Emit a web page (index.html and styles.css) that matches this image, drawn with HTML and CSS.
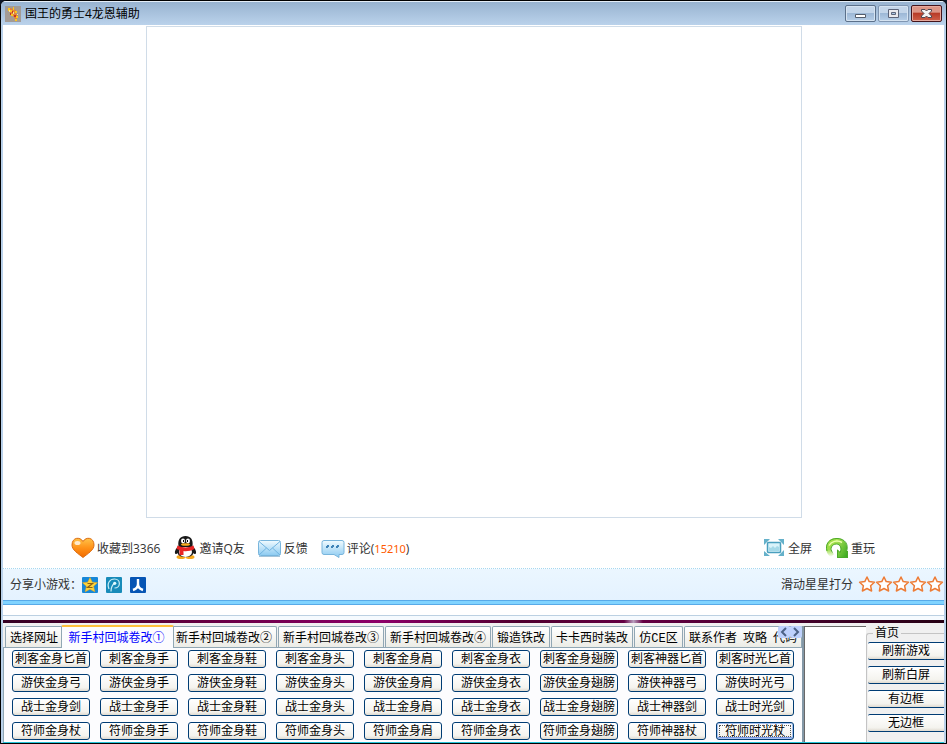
FILE: index.html
```html
<!DOCTYPE html>
<html lang="zh-CN">
<head>
<meta charset="utf-8">
<title>国王的勇士4龙恩辅助</title>
<link rel="stylesheet" href="styles.css">
</head>
<body>
<div class="window">
  <header class="titlebar">
    <svg class="app-icon" viewBox="0 0 16 16" aria-hidden="true"><path fill="#a39b95" d="M0 0h16v16H0z"/><path fill="#e0843c" d="M3 2h3l2 1 3 1v3l2 3-1 3-2 1-1-3-3-2-2-4z"/><path fill="#ffc61c" d="M3 2h2v2h2v2H5V5H3zM8 1h1v3H8zM10 5h2v2h-2zM6 8h2v2H6zM11 10h2v2h-2zM10 13h2v2h-2z"/><path fill="#f4e6a6" d="M4 4h1v2H4zM8 6h1v2H8zM12 8h1v1h-1z"/><path fill="#c8351c" d="M7 5h1v2H7zM9 9h2v2H9zM5 7h1v2H5z"/></svg>
    <h1>国王的勇士4龙恩辅助</h1>
    <div class="win-controls">
      <button class="win-btn" type="button" aria-label="最小化"><svg viewBox="0 0 29 15"><path fill="#fff" stroke="#535c6b" d="M9.500 8.500h10v3h-10z"/></svg></button>
      <button class="win-btn muted" type="button" aria-label="最大化"><svg viewBox="0 0 29 15"><path fill="#e9e9ee" stroke="#5c6479" d="M9.500 3.500h10v8h-10z"/><path fill="#a9c4e3" stroke="#5c6479" d="M12.500 6.500h4v2h-4z"/></svg></button>
      <button class="win-btn close" type="button" aria-label="关闭"><svg viewBox="0 0 29 15"><path fill="#f5f3f3" stroke="#4c4650" d="M9.500 3.500h3.500l1.500 1.500 1.500-1.500h3.500v1.500L17 7.500l2.500 2.500v1.500H16L14.500 10 13 11.500H9.500V10L12 7.500 9.500 5z"/></svg></button>
    </div>
  </header>

  <main class="page">
    <div class="stage"></div>
    <nav class="actions">
      <a href="#fav"><svg viewBox="0 0 24 24"><defs><linearGradient id="h" x2="0" y2="1"><stop stop-color="#ffc34a"/><stop offset=".5" stop-color="#ff9218"/><stop offset="1" stop-color="#f26b00"/></linearGradient></defs><path fill="url(#h)" stroke="#dc6b10" d="M12 4.500C9-.7 1 .3 1 8c0 5 6 8.500 11 12.500C17 16.500 23 13 23 8 23 .3 15-.7 12 4.500z"/><ellipse cx="6.500" cy="6" rx="3" ry="2" fill="#fff" opacity=".75"/></svg><span>收藏到3366</span></a>
      <a href="#invite"><svg viewBox="0 0 24 24"><ellipse cx="8" cy="20" rx="4.500" ry="2" fill="#f7a81b"/><ellipse cx="17" cy="20" rx="4.500" ry="2" fill="#f7a81b"/><path fill="#191919" d="M5.500 9C4.500 2.500 7.500-1 12.500-1s8 3.500 7 10c3 3 4.500 6 3 8-1 .5-2-1-2-1-1 3-4 4-8 4s-7-1-8-4c0 0-1 1.500-2 1-1.500-2 0-5 3-8z"/><ellipse cx="12.500" cy="15" rx="6.500" ry="5" fill="#fff"/><ellipse cx="10" cy="4" rx="2" ry="2.400" fill="#fff"/><ellipse cx="15" cy="4" rx="2" ry="2.400" fill="#fff"/><path d="M10 3h1v2h-1zM14 3h1v2h-1z"/><ellipse cx="12.500" cy="7.500" rx="4.500" ry="1.300" fill="#f9ae22"/><path fill="#e82424" d="M4.500 8.500c5 2.500 11 2.500 16 0l1 3.500c-4 2-8 2.500-11 2v4h-4v-5l-3-1z"/></svg><span>邀请Q友</span></a>
      <a href="#feedback"><svg viewBox="0 0 24 24"><defs><linearGradient id="m" x2="0" y2="1"><stop stop-color="#f1fbff"/><stop offset="1" stop-color="#8bcaf1"/></linearGradient></defs><rect x=".5" y="3.500" width="22" height="15" rx="2" fill="url(#m)" stroke="#78b5dc"/><path d="M1 4.500l10.500 9 10.500-9M1 18l7.500-7M22 18l-7.500-7" fill="none" stroke="#70b4e0"/><path d="M1 19.500h21" stroke="#a4c4da"/></svg><span>反馈</span></a>
      <a href="#comments"><svg viewBox="0 0 24 24"><path fill="url(#m)" stroke="#78b5dc" d="M3 3.500h18q2 0 2 2v10q0 2-2 2h-3v3l-5-3H3q-2 0-2-2v-10q0-2 2-2z"/><path fill="#3f83b7" d="M5 9h1V8h2v2H7v1H5zM10 9h1V8h2v2h-1v1h-2zM15 9h1V8h2v2h-1v1h-2z"/></svg><span>评论(<b>15210</b>)</span></a>
      <a href="#full" class="push"><svg viewBox="0 0 24 24"><path fill="#65b1ca" d="M2 2h6L2 8zM16 2h6v6zM2 14l6 5H2zM22 13v6h-6z"/><rect x="5.500" y="5.500" width="13" height="10" rx="1" fill="#d9f3fa" stroke="#4a9fbe" stroke-width="1.500"/><path fill="#a5d9e8" d="M7 10l2 1 2-2 2 2 2-2 2 1v4H7z"/></svg><span>全屏</span></a>
      <a href="#replay"><svg viewBox="0 0 24 24"><defs><linearGradient id="r" x2="1" y2="1"><stop stop-color="#b7e95a"/><stop offset="1" stop-color="#2fa31b"/></linearGradient><linearGradient id="t" x2="0" y2="1"><stop stop-color="#a5e04a"/><stop offset=".6" stop-color="#9bdc48"/><stop offset="1" stop-color="#fff"/></linearGradient></defs><path fill="url(#t)" d="M12 1v6C5 7 4 14 9 17l-3 3C-2 15 0 1 12 1z"/><path fill="url(#r)" d="M11 .9c8 0 13 6.500 10.500 13.100H23v7H12v-9l3 3c2-4 0-8-4-8z"/><path d="M12 1.500c8 0 12 6 9.500 13h1v6h-10v-7.500l2.500 2.500c2.500-4 0-8.500-3.500-8.500-5 0-7 5-4 8.500M2 14C0 7 4 1.500 12 1.500" fill="none" stroke="#4aa92a"/><path d="M4 8.500C6 4.500 12 2.500 17 5.500" fill="none" stroke="#eaffac" stroke-width="1.500"/></svg><span>重玩</span></a>
    </nav>
    <section class="share">
      <span>分享小游戏：</span>
      <a href="#qzone" aria-label="QQ空间"><svg viewBox="0 0 16 16"><rect width="16" height="16" rx="1" fill="#1687d8"/><path fill="#ffd33a" stroke="#f3a617" stroke-width=".5" d="M8 .5l2.300 4.700 5.200.5-3.900 3.600 1.200 5.500L8 12.200l-4.800 2.600 1.200-5.500L.5 5.700l5.200-.5z"/><path d="M5.500 6.500h5l-5 4h5" fill="none" stroke="#8a6218" stroke-width="1.200"/></svg></a>
      <a href="#weibo" aria-label="腾讯微博"><svg viewBox="0 0 16 16"><rect width="16" height="16" rx="1" fill="#188bb9"/><path d="M3 12C.5 6 4 2 8.500 2c6.500 0 6.500 9 0 9M5 14.500c0-4 1-6 3-8" fill="none" stroke="#caedf5" stroke-width="1.200"/><circle cx="8.700" cy="6.300" r="1.600" fill="#e5fbff"/></svg></a>
      <a href="#pengyou" aria-label="朋友"><svg viewBox="0 0 16 16"><rect width="16" height="16" rx="1" fill="#0755b4"/><path d="M8 2v5c0 3-2 5-5 6M8 7c0 3 2 5 5 6" fill="none" stroke="#fff" stroke-width="2.400"/></svg></a>
      <span class="rate-label">滑动星星打分</span>
      <span class="stars">
        <svg viewBox="0 0 85 16" aria-hidden="true"><defs><path id="s" fill="#fff" stroke="#ed7c36" stroke-width="1.500" stroke-linejoin="round" d="M8 1l2.200 4.600 5.200.6-3.800 3.500 1 5.300L8 12.500 3.400 15l1-5.300L.6 6.200l5.200-.6z"/></defs><use href="#s"/><use href="#s" x="17"/><use href="#s" x="34"/><use href="#s" x="51"/><use href="#s" x="68"/></svg>
      </span>
    </section>
    <div class="blue-bar"></div>
    <div class="gap"></div>
    <div class="lower-line"></div>
  </main>
  <div class="purple"></div>

  <section class="panel">
    <div class="tool-tabs">
      <div class="tabs" role="tablist">
        <button type="button" role="tab" class="tab w-small">选择网址</button>
        <button type="button" role="tab" class="tab active" aria-selected="true">新手村回城卷改①</button>
        <button type="button" role="tab" class="tab w-long">新手村回城卷改②</button>
        <button type="button" role="tab" class="tab w-long">新手村回城卷改③</button>
        <button type="button" role="tab" class="tab w-long">新手村回城卷改④</button>
        <button type="button" role="tab" class="tab w-small">锻造铁改</button>
        <button type="button" role="tab" class="tab w-mid">卡卡西时装改</button>
        <button type="button" role="tab" class="tab w-short">仿<span class="mono">CE</span>区</button>
        <button type="button" role="tab" class="tab w-rest">联系作者<i></i>攻略<i></i>代码</button>
        <div class="scroller">
          <button type="button" aria-label="向左"><svg viewBox="0 0 12 12"><path d="M8 2L4 6l4 4"/></svg></button>
          <button type="button" aria-label="向右"><svg viewBox="0 0 12 12"><path d="M4 2l4 4-4 4"/></svg></button>
        </div>
      </div>
      <div class="grid">
        <button type="button">刺客金身匕首</button><button type="button">刺客金身手</button><button type="button">刺客金身鞋</button><button type="button">刺客金身头</button><button type="button">刺客金身肩</button><button type="button">刺客金身衣</button><button type="button">刺客金身翅膀</button><button type="button">刺客神器匕首</button><button type="button">刺客时光匕首</button>
        <button type="button">游侠金身弓</button><button type="button">游侠金身手</button><button type="button">游侠金身鞋</button><button type="button">游侠金身头</button><button type="button">游侠金身肩</button><button type="button">游侠金身衣</button><button type="button">游侠金身翅膀</button><button type="button">游侠神器弓</button><button type="button">游侠时光弓</button>
        <button type="button">战士金身剑</button><button type="button">战士金身手</button><button type="button">战士金身鞋</button><button type="button">战士金身头</button><button type="button">战士金身肩</button><button type="button">战士金身衣</button><button type="button">战士金身翅膀</button><button type="button">战士神器剑</button><button type="button">战士时光剑</button>
        <button type="button">符师金身杖</button><button type="button">符师金身手</button><button type="button">符师金身鞋</button><button type="button">符师金身头</button><button type="button">符师金身肩</button><button type="button">符师金身衣</button><button type="button">符师金身翅膀</button><button type="button">符师神器杖</button><button type="button" class="focused">符师时光杖</button>
      </div>
    </div>
    <textarea class="memo" aria-label="记录"></textarea>
    <fieldset class="home">
      <legend>首页</legend>
      <button type="button">刷新游戏</button>
      <button type="button">刷新白屏</button>
      <button type="button">有边框</button>
      <button type="button">无边框</button>
    </fieldset>
  </section>
</div>
</body>
</html>
```
FILE: styles.css
```css
* { box-sizing: border-box; }

body {
  margin: 0;
  background: #0c1626;
  font: 12px/16px "Liberation Sans", "Noto Sans CJK SC", sans-serif;
  color: #000;
}

button {
  font: inherit;
  color: inherit;
  padding: 0;
  margin: 0;
  white-space: nowrap;
}

svg { display: block; overflow: visible; }

.window {
  display: flex;
  flex-direction: column;
  height: 100vh;
  border: 1px solid #000;
  border-radius: 6px 6px 0 0;
  background: #b9d1ea;
  overflow: hidden;
}

.titlebar {
  display: flex;
  align-items: center;
  height: 24px;
  flex: none;
  padding: 0 4px;
  border-top: 1px solid #e4eef8;
  background: linear-gradient(#98b3d0, #bad2eb);
}

.app-icon { width: 16px; height: 16px; }

.titlebar h1 {
  flex: 1;
  margin: 0 0 0 4px;
  font: 12px/16px "Open Sans", "Noto Sans CJK SC", sans-serif;
}

.win-controls { display: flex; gap: 2px; }

.win-btn {
  width: 31px;
  height: 17px;
  border: 1px solid #5b708a;
  border-radius: 2px;
  background: linear-gradient(#c3d5e9 45%, #9db8d6 50%, #b7cfe8);
  box-shadow: inset 0 0 0 1px #d5e3f1;
}

.win-btn svg { width: 29px; height: 15px; }

.win-btn.muted { border-color: #8096b2; }

.win-btn.close {
  border-color: #43141b;
  background: linear-gradient(#dc9586 40%, #b83c28 50%, #d0604a);
  box-shadow: inset 0 0 0 1px #e7aa9e;
}

.page {
  flex: 1;
  display: flex;
  flex-direction: column;
  min-height: 0;
  margin: 0 2px;
  padding-top: 1px;
  background: #fff;
  color: #333;
}

.stage {
  flex: 1;
  width: 70%;
  max-width: 656px;
  margin: 0 auto;
  border: 1px solid #d0dce8;
}

.page a { color: inherit; text-decoration: none; }

.actions {
  display: flex;
  align-items: center;
  flex: none;
  gap: 13px;
  height: 51px;
  padding: 12px 69px 0 68px;
  border-bottom: 1px dotted #a6d8f0;
  font-family: "Open Sans", "Noto Sans CJK SC", sans-serif;
}

.actions a { display: flex; align-items: center; gap: 2px; }

.actions svg { width: 24px; height: 24px; }

.actions b { font: 11px/16px "Noto Sans", sans-serif; color: #ff5a00; }

.actions .push { margin-left: auto; }

.share {
  display: flex;
  align-items: center;
  flex: none;
  gap: 8px;
  height: 31px;
  padding-left: 7px;
  background: linear-gradient(#ebf6ff, #e4f2ff);
}

.share a svg { width: 16px; height: 16px; }

.share span:first-child { margin-right: -8px; }

.rate-label { margin-left: auto; }

.stars svg { width: 85px; height: 16px; }

.stars { margin-left: -2px; padding-bottom: 2px; }

.blue-bar {
  flex: none;
  height: 5px;
  background: #80d3ff;
  border: solid #58aae8;
  border-width: 1px 0;
}

.gap { flex: none; height: 10px; }

.lower-line { flex: none; height: 5px; border-top: 1px solid #bbd0e2; background: #f5fafe; }

.purple {
  flex: none;
  height: 3px;
  margin: 0 2px;
  background: linear-gradient(90deg, #350021, #64003f 20%, #8d0068 40%, #50002e 55%, #640042 66%, #b79dbd 67%, #640042 68%, #260014);
}

.panel {
  flex: none;
  display: flex;
  height: 120px;
  margin: 0 2px;
  padding-top: 3px;
  background: #f0f0f0;
  border-bottom: 1px solid #24c4d8;
}

.tool-tabs {
  flex: none;
  width: 801px;
  display: flex;
  flex-direction: column;
  border-right: 2px solid #8498a7;
}

.tabs {
  position: relative;
  display: flex;
  align-items: flex-end;
  height: 22px;
  flex: none;
  gap: 1px;
  padding-left: 2px;
  border-bottom: 1px solid #91a7b4;
}

.tab {
  flex: none;
  height: 21px;
  padding-top: 2px;
  border: 1px solid #91a7b4;
  border-bottom: 0;
  border-radius: 2px 2px 0 0;
  background: linear-gradient(#fff, #ecece6);
  overflow: hidden;
}

.w-small { width: 58px; }
.w-long { width: 106px; }
.w-mid { width: 82px; }
.w-short { width: 49px; }
.w-rest { flex: 1; text-align: left; padding-left: 4px; }

.w-rest i { display: inline-block; width: 6px; }

.tab.active {
  width: 113px;
  height: 23px;
  margin: 0 -4px -1px -3px;
  padding: 0 2px 0 0;
  z-index: 1;
  border-top: 2px solid #ffc03c;
  background: #fcfcfe;
  color: #00f;
}

.mono { font-family: "Liberation Mono", monospace; }

.scroller {
  position: absolute;
  top: 0;
  right: 0;
  display: flex;
  z-index: 2;
}

.scroller button {
  width: 12px;
  height: 12px;
  border: 0;
  border-radius: 2px;
  background: #bfd1fc;
}

.scroller svg { width: 12px; height: 12px; fill: none; stroke: #4d6185; stroke-width: 2; }

.grid {
  flex: 1;
  display: grid;
  grid-template-columns: repeat(9, 78px);
  grid-auto-rows: 18px;
  gap: 6px 10px;
  padding: 2px 0 0 8px;
  border-left: 1px solid #91a7b4;
  background: #fcfcfe;
}

.grid button,
.home button {
  height: 18px;
  line-height: 16px;
  border: 1px solid #003c74;
  border-radius: 3px;
  background: linear-gradient(#fff, #f4f3ee 80%, #dfdad0);
}

.grid .focused {
  box-shadow: inset 0 0 0 1px #a9c3f3, inset 0 -2px 0 #7b9ce8;
  outline: 1px dotted #555;
  outline-offset: -4px;
}

.memo {
  flex: none;
  width: 62px;
  margin: 0;
  border: solid #696969;
  border-width: 1px 0 0 1px;
  background: #fff;
  resize: none;
}

.home {
  flex: 1;
  display: flex;
  flex-direction: column;
  gap: 6px;
  min-width: 0;
  margin: 0;
  padding: 2px 0 0 1px;
  border: solid #c4c4c4;
  border-width: 1px 0 0 1px;
  border-radius: 3px 0 0 0;
}

.home legend { margin-left: 5px; padding: 0 2px; height: 14px; line-height: 14px; }

.home button { border-width: 1px 0; border-radius: 2px 0 0 2px; }
```
